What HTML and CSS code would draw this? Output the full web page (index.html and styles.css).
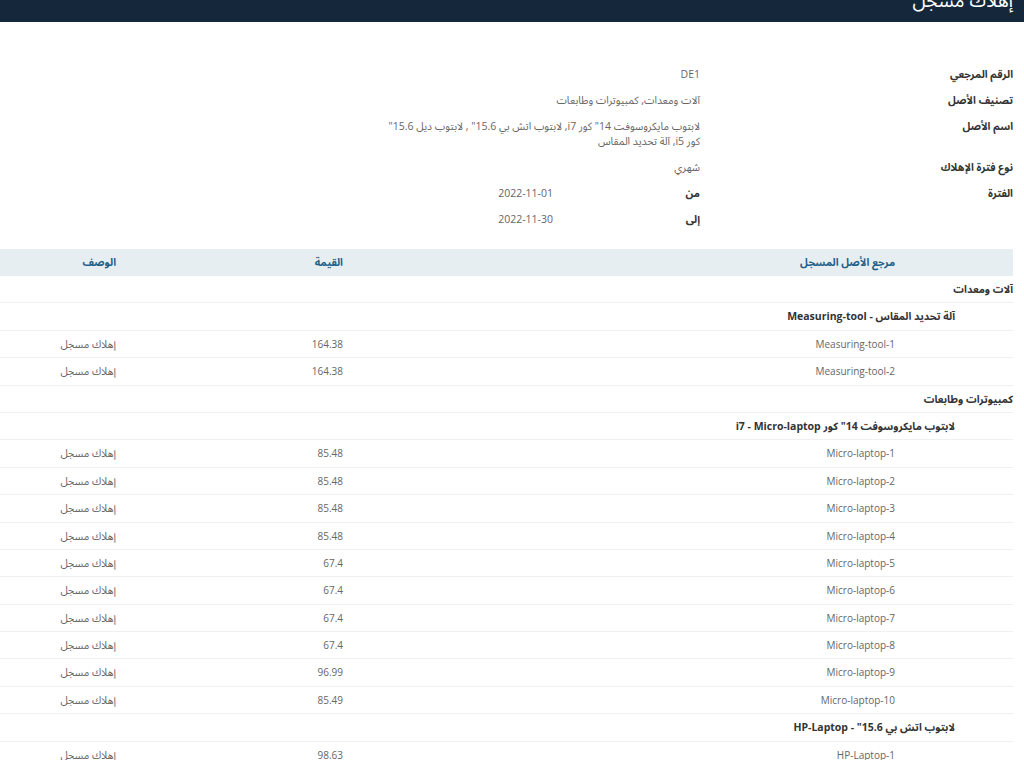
FILE: index.html
```html
<!DOCTYPE html>
<html lang="ar" dir="rtl">
<head>
<meta charset="utf-8">
<title>إهلاك مسجل</title>
<link rel="stylesheet" href="styles.css">
</head>
<body>
<header class="topbar"><h1 class="title">إهلاك مسجل</h1></header>
<main class="page">
  <section class="info">
    <div class="info-row"><div class="label">الرقم المرجعي</div><div class="value">DE1</div></div>
    <div class="info-row"><div class="label">تصنيف الأصل</div><div class="value">آلات ومعدات, كمبيوترات وطابعات</div></div>
    <div class="info-row"><div class="label">اسم الأصل</div><div class="value wide">لابتوب مايكروسوفت 14" كور i7, لابتوب اتش بي 15.6" , لابتوب ديل 15.6" كور i5, آلة تحديد المقاس</div></div>
    <div class="info-row"><div class="label">نوع فترة الإهلاك</div><div class="value">شهري</div></div>
    <div class="info-row"><div class="label">الفترة</div>
      <div class="period">
        <div class="period-row"><div class="sublabel">من</div><div class="value">2022-11-01</div></div>
        <div class="period-row"><div class="sublabel">إلى</div><div class="value">2022-11-30</div></div>
      </div>
    </div>
  </section>
  <table class="grid">
    <colgroup><col class="c-indent"><col class="c-ref"><col class="c-val"><col class="c-desc"></colgroup>
    <thead>
      <tr><th></th><th>مرجع الأصل المسجل</th><th>القيمة</th><th>الوصف</th></tr>
    </thead>
    <tbody>
      <tr class="group"><td colspan="4">آلات ومعدات</td></tr>
      <tr class="sub"><td colspan="4">آلة تحديد المقاس - Measuring-tool</td></tr>
      <tr><td></td><td>Measuring-tool-1</td><td>164.38</td><td class="desc">إهلاك مسجل</td></tr>
      <tr><td></td><td>Measuring-tool-2</td><td>164.38</td><td class="desc">إهلاك مسجل</td></tr>
      <tr class="group"><td colspan="4">كمبيوترات وطابعات</td></tr>
      <tr class="sub"><td colspan="4">لابتوب مايكروسوفت 14" كور i7 - Micro-laptop</td></tr>
      <tr><td></td><td>Micro-laptop-1</td><td>85.48</td><td class="desc">إهلاك مسجل</td></tr>
      <tr><td></td><td>Micro-laptop-2</td><td>85.48</td><td class="desc">إهلاك مسجل</td></tr>
      <tr><td></td><td>Micro-laptop-3</td><td>85.48</td><td class="desc">إهلاك مسجل</td></tr>
      <tr><td></td><td>Micro-laptop-4</td><td>85.48</td><td class="desc">إهلاك مسجل</td></tr>
      <tr><td></td><td>Micro-laptop-5</td><td>67.4</td><td class="desc">إهلاك مسجل</td></tr>
      <tr><td></td><td>Micro-laptop-6</td><td>67.4</td><td class="desc">إهلاك مسجل</td></tr>
      <tr><td></td><td>Micro-laptop-7</td><td>67.4</td><td class="desc">إهلاك مسجل</td></tr>
      <tr><td></td><td>Micro-laptop-8</td><td>67.4</td><td class="desc">إهلاك مسجل</td></tr>
      <tr><td></td><td>Micro-laptop-9</td><td>96.99</td><td class="desc">إهلاك مسجل</td></tr>
      <tr><td></td><td>Micro-laptop-10</td><td>85.49</td><td class="desc">إهلاك مسجل</td></tr>
      <tr class="sub"><td colspan="4">لابتوب اتش بي 15.6" - HP-Laptop</td></tr>
      <tr><td></td><td>HP-Laptop-1</td><td>98.63</td><td class="desc">إهلاك مسجل</td></tr>
      <tr><td></td><td>HP-Laptop-2</td><td>98.63</td><td class="desc">إهلاك مسجل</td></tr>
    </tbody>
  </table>
</main>
</body>
</html>
```
FILE: styles.css
```css
* { box-sizing: border-box; }
html, body { margin: 0; padding: 0; background: #fff; }
body {
  font-family: "Open Sans", "Noto Sans Arabic", "DejaVu Sans", sans-serif;
  font-size: 10.5px;
  color: #666;
  overflow: hidden;
}
.topbar {
  height: 22px;
  background: #15273b;
  overflow: hidden;
  padding-right: 11px;
}
.title {
  margin: -12px 0 0 0;
  font-size: 19px;
  line-height: 24px;
  font-weight: 400;
  color: #fff;
}
.page {
  padding: 39px 11px 0 0;
}
.info {
  display: flex;
  flex-direction: column;
  padding-bottom: 17px;
}
.info-row {
  display: flex;
  align-items: flex-start;
}
.label {
  width: 313px;
  flex: none;
  font-weight: 700;
  color: #333;
  line-height: 15px;
  padding: 5.5px 0;
}
.value {
  width: 310px;
  line-height: 15px;
  padding: 5.5px 0;
  color: #666;
}
.value.wide { width: 322px; }
.period { display: flex; flex-direction: column; }
.period-row { display: flex; }
.sublabel {
  width: 147px;
  flex: none;
  font-weight: 700;
  color: #333;
  line-height: 15px;
  padding: 5.5px 0;
}
.period-row .value { width: 160px; }
.grid {
  width: 1013px;
  border-collapse: collapse;
  table-layout: fixed;
  font-size: 10px;
}
.c-indent { width: 108px; }
.c-ref { width: 552px; }
.c-val { width: 227px; }
.c-desc { width: 126px; }
.grid th {
  background: #e7eef1;
  color: #1e5f8a;
  font-weight: 700;
  text-align: right;
  padding: 6px 10px 6px 10px;
  line-height: 15px;
  font-size: 10.5px;
}
.grid td {
  text-align: right;
  padding: 6px 10px 5.4px 10px;
  line-height: 15px;
  border-bottom: 1px solid #eef0f1;
  color: #666;
  white-space: nowrap;
}
.grid td.desc { font-size: 10.5px; }
.grid tr.group td,
.grid tr.sub td {
  font-size: 10.5px;
  font-weight: 700;
  color: #333;
}
.grid tr.group td { padding-right: 0; }
.grid tr.sub td { padding-right: 58px; }
```
